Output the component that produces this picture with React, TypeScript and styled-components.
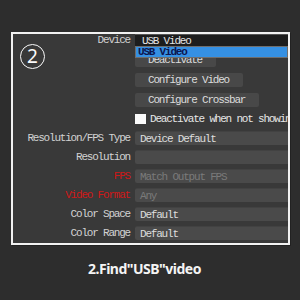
import React from "react";
import styled, { createGlobalStyle } from "styled-components";

const Global = createGlobalStyle`
  html, body { margin: 0; padding: 0; background: #2d2d2d; }
  body { width: 300px; height: 300px; overflow: hidden; }
`;

const mono = `"Liberation Mono", "DejaVu Sans Mono", monospace`;

const Page = styled.div`
  width: 300px;
  height: 300px;
  background: #2d2d2d;
  display: flex;
  flex-direction: column;
  padding-top: 32px;
  box-sizing: border-box;
`;

const Frame = styled.div`
  position: relative;
  margin-left: 11px;
  width: 279px;
  height: 213px;
  box-sizing: border-box;
  border: 2px solid #f2f2f2;
  background: #393939;
  box-shadow: 1px 1px 0 #222;
  display: flex;
  flex-direction: column;
  overflow: hidden;
`;

const Badge = styled.div`
  position: absolute;
  left: 7px;
  top: 10px;
  width: 25px;
  height: 25px;
  box-sizing: border-box;
  border: 1.6px solid #fafafa;
  border-radius: 50%;
  display: flex;
  align-items: center;
  justify-content: center;
  color: #fafafa;
  font-family: "Noto Sans", sans-serif;
  font-size: 19px;
  line-height: 1;
`;

const Row = styled.div<{ $h: number; $mt: number }>`
  display: grid;
  grid-template-columns: 117px 153px;
  column-gap: 5px;
  align-items: center;
  height: ${(p) => p.$h}px;
  margin-top: ${(p) => p.$mt}px;
  position: relative;
`;

const Label = styled.div<{ $red?: boolean }>`
  font-family: ${mono};
  font-size: 11px;
  letter-spacing: -1.2px;
  color: ${(p) => (p.$red ? "#d01818" : "#d2d2d2")};
  text-align: right;
  white-space: nowrap;
  line-height: 1;
`;

const Combo = styled.div`
  height: 100%;
  background: #1d1d1d;
  border-top: 1px solid #555;
  box-sizing: border-box;
  padding-left: 7px;
  display: flex;
  align-items: center;
  font-family: ${mono};
  font-size: 11px;
  letter-spacing: -1.2px;
  color: #e4e4e4;
  white-space: nowrap;
`;

const DropList = styled.div`
  position: absolute;
  left: 122px;
  right: 0;
  top: 12px;
  height: 12px;
  box-sizing: border-box;
  border: 1px solid #6e6e6e;
  background: #3590e3;
  z-index: 2;
  display: flex;
  align-items: center;
  padding-left: 2px;
  font-family: ${mono};
  font-size: 11px;
  letter-spacing: -1.2px;
  color: #0c1650;
  font-weight: bold;
  white-space: nowrap;
`;

const Cell = styled.div`
  height: 100%;
  display: flex;
  align-items: center;
  min-width: 0;
`;

const Button = styled.div`
  height: 100%;
  box-sizing: border-box;
  padding: 0 14px 0 13px;
  background: #484848;
  border-radius: 2px;
  display: flex;
  align-items: center;
  font-family: ${mono};
  font-size: 11px;
  letter-spacing: -1.2px;
  color: #dcdcdc;
  white-space: nowrap;
`;

const Check = styled.div`
  display: flex;
  align-items: center;
  gap: 4px;
  font-family: ${mono};
  font-size: 11px;
  letter-spacing: -1.2px;
  color: #e6e6e6;
  white-space: nowrap;
  overflow: hidden;
`;

const Box = styled.span`
  width: 11px;
  height: 10px;
  flex: none;
  background: #fafafa;
`;

const Field = styled.div<{ $dim?: boolean }>`
  width: 100%;
  height: 100%;
  box-sizing: border-box;
  background: #4a4a4a;
  border-top: 1px solid #424242;
  border-radius: 2px 0 0 2px;
  padding-left: 5px;
  display: flex;
  align-items: center;
  font-family: ${mono};
  font-size: 11px;
  letter-spacing: -1.2px;
  color: ${(p) => (p.$dim ? "#7a7a7a" : "#dedede")};
  white-space: nowrap;
`;

const Caption = styled.div`
  margin-top: 14px;
  padding-right: 11px;
  text-align: center;
  font-family: "Noto Sans", sans-serif;
  font-weight: bold;
  font-size: 14px;
  letter-spacing: -0.5px;
  color: #f4f4f4;
`;

const fields: { label: string; value: string; red?: boolean; dim?: boolean }[] = [
  { label: "Resolution/FPS Type", value: "Device Default" },
  { label: "Resolution", value: "" },
  { label: "FPS", value: "Match Output FPS", red: true, dim: true },
  { label: "Video Format", value: "Any", red: true, dim: true },
  { label: "Color Space", value: "Default" },
  { label: "Color Range", value: "Default" },
];

export default function App() {
  return (
    <Page>
      <Global />
      <Frame>
        <Badge>2</Badge>
        <Row $h={12} $mt={0}>
          <Label>Device</Label>
          <Combo>USB Video</Combo>
          <DropList>USB Video</DropList>
        </Row>
        <Row $h={14} $mt={7}>
          <span />
          <Cell>
            <Button>Deactivate</Button>
          </Cell>
        </Row>
        <Row $h={14} $mt={6}>
          <span />
          <Cell>
            <Button>Configure Video</Button>
          </Cell>
        </Row>
        <Row $h={14} $mt={6}>
          <span />
          <Cell>
            <Button>Configure Crossbar</Button>
          </Cell>
        </Row>
        <Row $h={12} $mt={6}>
          <span />
          <Check>
            <Box />
            Deactivate when not showing
          </Check>
        </Row>
        {fields.map((f, i) => (
          <Row key={f.label} $h={14} $mt={i === 0 ? 6 : 5}>
            <Label $red={f.red}>{f.label}</Label>
            <Field $dim={f.dim}>{f.value}</Field>
          </Row>
        ))}
      </Frame>
      <Caption>2.Find"USB"video</Caption>
    </Page>
  );
}
